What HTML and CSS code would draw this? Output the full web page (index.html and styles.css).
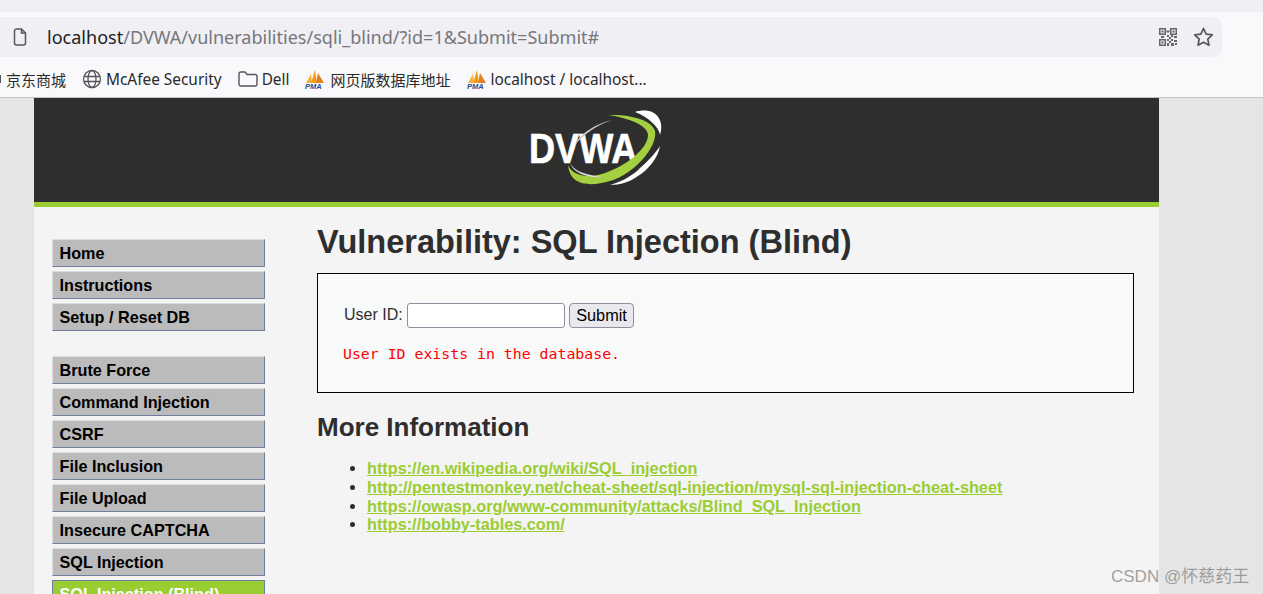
FILE: index.html
```html
<!DOCTYPE html>
<html lang="en">
<head>
    <meta charset="UTF-8">
    <title>Vulnerability: SQL Injection (Blind)</title>
    <link rel="stylesheet" href="styles.css">
</head>
<body>

    <!-- Browser chrome -->
    <div class="top-strip"></div>
    <div class="toolbar">
        <div class="address-bar">
            <svg class="page-icon" width="16" height="18" viewBox="0 0 16 18"><path d="M2.500 3a2 2 0 0 1 2-2h5l4 4v10a2 2 0 0 1-2 2h-7a2 2 0 0 1-2-2z" fill="none" stroke="#55555b" stroke-width="1.500"/><path d="M9.500 1v4h4" fill="none" stroke="#55555b" stroke-width="1.500"/></svg>
            <div class="url"><span class="url-host">localhost</span>/DVWA/vulnerabilities/sqli_blind/?id=1&amp;Submit=Submit#</div>
            <svg class="qr-icon" width="18" height="18" viewBox="0 0 18 18" fill="#66666c">
                <path d="M0 0h7v7H0zM1.500 1.500v4h4v-4zM11 0h7v7h-7zM12.500 1.500v4h4v-4zM0 11h7v7H0zM1.500 12.500v4h4v-4z" fill-rule="evenodd"/>
                <path d="M2.500 2.500h2v2h-2zM13.500 2.500h2v2h-2zM2.500 13.500h2v2h-2zM7.500 2.500h3v2h-3zM8 7h2v2H8zM10 9h2v2h-2zM12 7h2v2h-2zM15 8h3v2h-3zM8 11h2v2H8zM12 11h2v2h-2zM15 12h3v2h-3zM10 13h2v2h-2zM8 15h2v3H8zM12 15h3v3h-3zM16 15h2v2h-2zM2 8h3v2H2z"/>
            </svg>
            <svg class="star-icon" width="21" height="20" viewBox="0 0 21 20"><path d="M10.500 1.500l2.700 5.600 6.100.8-4.500 4.200 1.200 6.100-5.500-3-5.500 3 1.200-6.100-4.500-4.200 6.100-.8z" fill="none" stroke="#55555b" stroke-width="1.700" stroke-linejoin="round"/></svg>
        </div>
    </div>
    <div class="bookmarks">
        <span class="bookmark cjk"><i class="cut-icon"></i>京东商城</span>
        <span class="bookmark">
            <svg width="20" height="20" viewBox="0 0 20 20" fill="none" stroke="#55555b" stroke-width="1.300"><circle cx="10" cy="10" r="8.500"/><ellipse cx="10" cy="10" rx="4" ry="8.500"/><path d="M2 7.500h16M2 12.500h16"/></svg>
            McAfee Security
        </span>
        <span class="bookmark">
            <svg width="20" height="18" viewBox="0 0 20 18" fill="none" stroke="#55555b" stroke-width="1.400"><path d="M1 4a2 2 0 0 1 2-2h4l2 2.500h8a2 2 0 0 1 2 2V14a2 2 0 0 1-2 2H3a2 2 0 0 1-2-2z"/></svg>
            Dell
        </span>
        <span class="bookmark cjk">
            <svg width="20" height="20" viewBox="0 0 20 20"><path d="M1 14L6 5l1 9z" fill="#f5b041"/><path d="M6 14L10 1l2 13z" fill="#f39c12"/><path d="M11 14L13 4l6 10z" fill="#e67e22"/><text x="0" y="19.500" class="pma-text">PMA</text></svg>
            网页版数据库地址
        </span>
        <span class="bookmark">
            <svg width="20" height="20" viewBox="0 0 20 20"><path d="M1 14L6 5l1 9z" fill="#f5b041"/><path d="M6 14L10 1l2 13z" fill="#f39c12"/><path d="M11 14L13 4l6 10z" fill="#e67e22"/><text x="0" y="19.500" class="pma-text">PMA</text></svg>
            localhost / localhost...
        </span>
    </div>

    <!-- DVWA page -->
    <div class="viewport">
        <div class="container">
            <div class="header">
                <div class="logo">
                    <span class="logo-text">DVWA</span>
                    <svg class="logo-swoosh" width="140" height="84" viewBox="0 0 140 84">
                        <path d="M78 7C100 6 122 12 125 23C128 38 105 66 80 73C60 79 40 78 38 57C42 68 60 72 80 63C98 56 118 40 118 27C118 18 100 10 78 7z" fill="#a4cf40"/>
                        <path d="M105 4C110 2 118 2 122 4C131 8 133 18 130 27C129 19 118 9 105 4z" fill="#fff"/>
                        <path d="M130 38C128 50 118 62 108 68C100 74 90 77 80 77C90 74 103 68 110 60C118 53 124 47 130 38z" fill="#fff"/>
                        <path d="M82 12C68 15 50 25 45 37C52 28 66 17 82 12z" fill="#ccc"/>
                        <path d="M40 55C44 63 55 67 73 69C58 70 44 66 40 55z" fill="#ddd"/>
                    </svg>
                </div>
            </div>

            <div class="main">
                <div class="sidebar">
                    <div class="menu-block">
                        <a class="menu-item">Home</a>
                        <a class="menu-item">Instructions</a>
                        <a class="menu-item">Setup / Reset DB</a>
                    </div>
                    <div class="menu-block">
                        <a class="menu-item">Brute Force</a>
                        <a class="menu-item">Command Injection</a>
                        <a class="menu-item">CSRF</a>
                        <a class="menu-item">File Inclusion</a>
                        <a class="menu-item">File Upload</a>
                        <a class="menu-item">Insecure CAPTCHA</a>
                        <a class="menu-item">SQL Injection</a>
                        <a class="menu-item selected">SQL Injection (Blind)</a>
                    </div>
                </div>

                <div class="content">
                    <h1>Vulnerability: SQL Injection (Blind)</h1>
                    <div class="vulnerable-code">
                        <form class="id-form">
                            <label for="userId">User ID:</label>
                            <input type="text" id="userId">
                            <button type="button">Submit</button>
                        </form>
                        <pre class="result">User ID exists in the database.</pre>
                    </div>
                    <h2>More Information</h2>
                    <ul class="links">
                        <li><a href="#">https://en.wikipedia.org/wiki/SQL_injection</a></li>
                        <li><a href="#">http://pentestmonkey.net/cheat-sheet/sql-injection/mysql-sql-injection-cheat-sheet</a></li>
                        <li><a href="#">https://owasp.org/www-community/attacks/Blind_SQL_Injection</a></li>
                        <li><a href="#">https://bobby-tables.com/</a></li>
                    </ul>
                </div>
            </div>
        </div>
    </div>

    <div class="watermark">CSDN @怀慈药王</div>

</body>
</html>
```

FILE: styles.css
```css
* {
    margin: 0;
    padding: 0;
    box-sizing: border-box;
}

html, body {
    height: 594px;
    overflow: hidden;
}

body {
    font-family: "Liberation Sans", Arial, sans-serif;
    background: #e5e5e5;
    color: #2e2e2e;
}

/* Browser chrome */
.top-strip {
    height: 12px;
    background: #f0eff4;
}

.toolbar {
    height: 45px;
    padding-top: 5px;
    background: #f9f9fb;
}

.address-bar {
    display: flex;
    align-items: center;
    width: 1222px;
    height: 40px;
    padding-left: 12px;
    background: #f0eff4;
    border-radius: 0 8px 8px 0;
}

.url {
    flex: 1;
    margin-left: 19px;
    font-family: "Noto Sans", sans-serif;
    font-size: 18.050px;
    color: #77777c;
}

.url-host {
    color: #222;
}

.qr-icon {
    margin-right: 16px;
}

.star-icon {
    margin-right: 8px;
}

.bookmarks {
    display: flex;
    align-items: center;
    gap: 16px;
    height: 41px;
    padding-top: 4px;
    background: #f9f9fb;
    border-bottom: 1px solid #c4c4c4;
    font-family: "Noto Sans", "Noto Sans CJK SC", sans-serif;
    font-size: 15.400px;
    color: #2a2a2a;
}

.bookmark {
    display: flex;
    align-items: center;
    gap: 4px;
    white-space: nowrap;
}

.bookmark.cjk {
    gap: 5px;
    font-size: 15px;
}

.cut-icon {
    width: 1px;
    height: 8px;
    background: #55555b;
}

.pma-text {
    font-family: "Liberation Sans", sans-serif;
    font-size: 7.500px;
    font-weight: bold;
    font-style: italic;
    fill: #2d4a8c;
}

/* DVWA page */
.viewport {
    padding-left: 34px;
}

.container {
    width: 1125px;
    height: 497px;
    background: #f4f4f4;
}

.header {
    display: flex;
    justify-content: center;
    height: 109px;
    background: #2e2e2e;
    border-bottom: 5px solid #9acd32;
}

.logo {
    position: relative;
    width: 140px;
    height: 84px;
    margin-top: 10px;
    margin-left: 6px;
}

.logo-swoosh {
    position: absolute;
    top: 0;
    left: 0;
}

.logo-text {
    position: absolute;
    top: 17px;
    left: -1px;
    font-size: 42px;
    font-weight: bold;
    color: #fff;
    -webkit-text-stroke: 0.6px #fff;
    transform: scaleX(0.86);
    transform-origin: left;
}

.main {
    display: flex;
}

.sidebar {
    width: 231px;
    padding: 32px 0 0 18px;
}

.menu-block {
    margin-bottom: 25px;
}

.menu-item {
    display: block;
    width: 213px;
    height: 28px;
    margin-bottom: 4px;
    padding: 4px 0 0 6.500px;
    background: #bbb;
    border-top: 1px solid #ddd;
    border-left: 1px solid #ddd;
    border-right: 1px solid #6d7f9c;
    border-bottom: 1px solid #6d7f9c;
    font-size: 16.200px;
    font-weight: bold;
    color: #000;
}

.menu-item.selected {
    background: #9acd32;
    border-color: #6d7f9c;
    color: #fff;
}

.content {
    width: 817px;
    margin-left: 52px;
}

h1 {
    margin-top: 16px;
    font-size: 32.500px;
    line-height: 39px;
    font-weight: bold;
    color: #2e2e2e;
}

.vulnerable-code {
    height: 120px;
    margin-top: 11px;
    padding: 29px 26px 0;
    background: #f8f9f9;
    border: 1px solid #000;
}

.id-form {
    display: flex;
    align-items: center;
    font-size: 16px;
    color: #2e2e2e;
}

.id-form label {
    position: relative;
    top: -1px;
}

.id-form input {
    width: 158px;
    height: 25px;
    margin-left: 4px;
    background: #fff;
    border: 1px solid #8f8f9d;
    border-radius: 3px;
}

.id-form button {
    height: 25px;
    margin-left: 4px;
    padding: 0 6.500px;
    font-family: "Liberation Sans", Arial, sans-serif;
    font-size: 16.300px;
    color: #000;
    background: #e9e9ed;
    border: 1px solid #8f8f9d;
    border-radius: 4px;
}

.result {
    margin-top: 17px;
    margin-left: -1px;
    font-family: "DejaVu Sans Mono", monospace;
    font-size: 14.850px;
    line-height: 19px;
    color: #f00;
}

h2 {
    margin-top: 19px;
    font-size: 26px;
    line-height: 31px;
    font-weight: bold;
    color: #2e2e2e;
}

.links {
    margin-top: 16px;
    padding-left: 50px;
    font-size: 16.250px;
    line-height: 18.800px;
}

.links a {
    font-weight: bold;
    color: #9acd32;
}

.watermark {
    position: absolute;
    top: 562px;
    left: 1111px;
    font-family: "Liberation Sans", "Noto Sans CJK SC", sans-serif;
    font-size: 17px;
    color: rgba(130, 130, 130, 0.75);
    white-space: nowrap;
}
```
